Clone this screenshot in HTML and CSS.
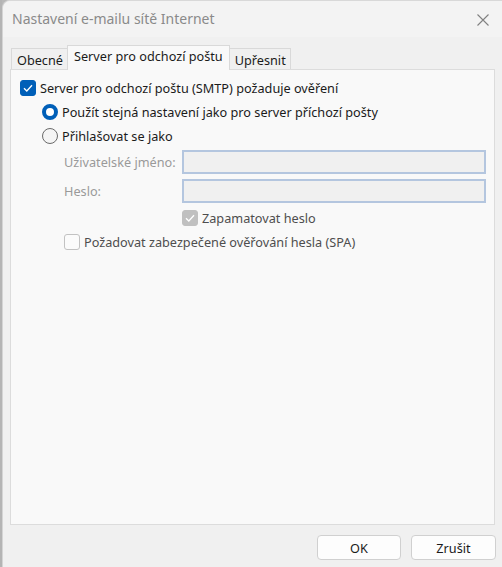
FILE: index.html
```html
<!DOCTYPE html>
<html lang="cs">
  <head>
    <meta charset="UTF-8" />
    <title>Nastavení e-mailu sítě Internet</title>
    <link rel="stylesheet" href="styles.css">
  </head>
  <body>
    <div class="backdrop"></div>
    <div class="window">
      <div class="titlebar">
        <span class="title">Nastavení e-mailu sítě Internet</span>
        <svg class="close" width="12" height="12" viewBox="0 0 12 12">
          <path d="M0.5 0.5 L11.5 11.5 M11.5 0.5 L0.5 11.5" stroke="#808080" stroke-width="1.1" fill="none" />
        </svg>
      </div>

      <div class="content">
        <div class="tabs">
          <div class="tab">Obecné</div>
          <div class="tab active">Server pro odchozí poštu</div>
          <div class="tab">Upřesnit</div>
        </div>

        <div class="panel">
          <div class="row">
            <span class="check checked">
              <svg width="10" height="8" viewBox="0 0 10 8"><path d="M1 4.2 L3.8 7 L9 1.2" stroke="#fff" stroke-width="1.3" fill="none" /></svg>
            </span>
            <span class="label">Server pro odchozí poštu (SMTP) požaduje ověření</span>
          </div>
          <div class="row indent1">
            <span class="radio selected"></span>
            <span class="label">Použít stejná nastavení jako pro server příchozí pošty</span>
          </div>
          <div class="row indent1">
            <span class="radio"></span>
            <span class="label">Přihlašovat se jako</span>
          </div>

          <div class="creds">
            <span class="field-label">Uživatelské jméno:</span>
            <div class="input"></div>
            <span class="field-label">Heslo:</span>
            <div class="input"></div>
          </div>

          <div class="row indent3">
            <span class="check checked disabled">
              <svg width="10" height="8" viewBox="0 0 10 8"><path d="M1 4.2 L3.8 7 L9 1.2" stroke="#fff" stroke-width="1.3" fill="none" /></svg>
            </span>
            <span class="label muted">Zapamatovat heslo</span>
          </div>
          <div class="row indent2">
            <span class="check disabled"></span>
            <span class="label muted">Požadovat zabezpečené ověřování hesla (SPA)</span>
          </div>
        </div>

        <div class="buttons">
          <button class="btn">OK</button>
          <button class="btn wide">Zrušit</button>
        </div>
      </div>
    </div>
  </body>
</html>
```

FILE: styles.css
```css
body {
  margin: 0;
  padding: 0;
  display: flex;
  height: 567px;
  overflow: hidden;
  font-family: "Noto Sans", "Open Sans", sans-serif;
  font-size: 12.7px;
  color: #1b1b1b;
  background: #b8b8b8;
}

.backdrop {
  width: 2px;
  background: #b4b4b4;
}

.window {
  flex: 1;
  background: #f0f0f0;
  border-left: 1px solid #d4d4d4;
  border-top: 1px solid #d8d8d8;
  border-top-left-radius: 8px;
  display: flex;
  flex-direction: column;
}

.titlebar {
  height: 36px;
  background: #f3f3f3;
  display: flex;
  align-items: center;
  padding-left: 9px;
  padding-right: 13px;
  border-top-left-radius: 8px;
}

.title {
  flex: 1;
  font-size: 14px;
  color: #8a8a8a;
  padding-bottom: 1px;
}

.close {
  margin-top: 1px;
}

.content {
  flex: 1;
  display: flex;
  flex-direction: column;
  padding: 8px 6px 0 7px;
}

.tabs {
  display: flex;
  align-items: flex-end;
  height: 24px;
  padding-left: 1px;
}

.tab {
  height: 21px;
  box-sizing: border-box;
  padding: 1px 4px 0 5px;
  display: flex;
  align-items: center;
  border: 1px solid #d9d9d9;
  border-bottom: none;
  background: #f0f0f0;
  margin-right: -1px;
}

.tab.active {
  height: 25px;
  background: #f9f9f9;
  padding: 0 6px 4px 6px;
  position: relative;
  margin-bottom: -1px;
  z-index: 1;
}

.panel {
  height: 456px;
  width: 485px;
  box-sizing: border-box;
  background: #f9f9f9;
  border: 1px solid #dcdcdc;
  padding: 6px 8px 0 9px;
  display: flex;
  flex-direction: column;
}

.row {
  height: 24px;
  display: flex;
  align-items: center;
}

.indent1 {
  padding-left: 22px;
}

.indent2 {
  padding-left: 44px;
}

.indent3 {
  padding-left: 162px;
}

.label {
  margin-left: 4px;
  white-space: nowrap;
}

.label.muted {
  color: #4e4e4e;
}

.check {
  width: 16px;
  height: 16px;
  box-sizing: border-box;
  border-radius: 3px;
  border: 1px solid #8a8a8a;
  background: #f7f7f7;
  display: flex;
  align-items: center;
  justify-content: center;
}

.check.checked {
  background: #005fb8;
  border-color: #005fb8;
}

.check.disabled {
  border-color: #c2c2c2;
  background: #fbfbfb;
}

.check.checked.disabled {
  background: #c0c0c0;
  border-color: #c0c0c0;
}

.radio {
  width: 16px;
  height: 16px;
  box-sizing: border-box;
  border-radius: 50%;
  border: 1px solid #6a6a6a;
  background: #f5f5f5;
}

.radio.selected {
  border: 4.5px solid #005fb8;
  background: #fff;
}

.creds {
  display: grid;
  grid-template-columns: 118px 1fr;
  grid-template-rows: 24px 24px;
  row-gap: 5px;
  align-items: center;
  padding-left: 44px;
  margin-top: 2px;
  margin-bottom: 3px;
}

.field-label {
  color: #9a9a9a;
}

.input {
  height: 24px;
  box-sizing: border-box;
  border: 2px solid #b4c6df;
  background: #f0f0f0;
}

.buttons {
  display: flex;
  justify-content: flex-end;
  gap: 10px;
  padding-top: 10px;
}

.btn {
  width: 84px;
  height: 25px;
  font-family: "Noto Sans", "Open Sans", sans-serif;
  font-size: 12.7px;
  color: #1b1b1b;
  background: #fdfdfd;
  border: 1px solid #d0d0d0;
  border-radius: 4px;
  padding: 0;
}

.btn.wide {
  width: 85px;
}
```
